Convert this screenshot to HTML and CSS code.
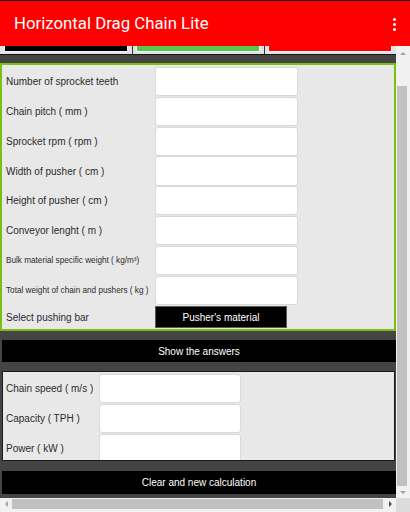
FILE: index.html
```html
<!DOCTYPE html>
<html>
<head>
<meta charset="utf-8">
<link rel="stylesheet" href="styles.css">
</head>
<body>
<div class="app">
  <header class="appbar">
    <span class="title">Horizontal Drag Chain Lite</span>
    <span class="menu"><i></i><i></i><i></i></span>
  </header>
  <div class="viewport">
    <div class="vrow">
      <main class="content">
        <div class="tabs">
          <div class="tab"><div class="tab-btn black"></div></div>
          <div class="tab sep"><div class="tab-btn green"></div></div>
          <div class="tab sep"><div class="tab-btn red"></div></div>
        </div>
        <section class="inputs">
          <div class="grid">
            <label class="lbl">Number of sprocket teeth</label><div class="field"></div>
            <label class="lbl">Chain pitch ( mm )</label><div class="field"></div>
            <label class="lbl">Sprocket rpm ( rpm )</label><div class="field"></div>
            <label class="lbl">Width of pusher ( cm )</label><div class="field"></div>
            <label class="lbl">Height of pusher ( cm )</label><div class="field"></div>
            <label class="lbl">Conveyor lenght ( m )</label><div class="field"></div>
            <label class="lbl small">Bulk material specific weight ( kg/m³)</label><div class="field"></div>
            <label class="lbl small">Total weight of chain and pushers ( kg )</label><div class="field"></div>
          </div>
          <div class="select-row">
            <label class="lbl">Select pushing bar</label>
            <div class="select-btn">Pusher's material</div>
          </div>
        </section>
        <div class="bar bar-show">Show the answers</div>
        <section class="results">
          <div class="grid res-grid">
            <label class="lbl">Chain speed ( m/s )</label><div class="field"></div>
            <label class="lbl">Capacity ( TPH )</label><div class="field"></div>
            <label class="lbl">Power ( kW )</label><div class="field"></div>
          </div>
        </section>
        <div class="bar bar-clear">Clear and new calculation</div>
      </main>
      <div class="vscroll">
        <div class="sb-btn up"><span class="tri-up"></span></div>
        <div class="v-space"></div>
        <div class="v-thumb"></div>
        <div class="sb-btn down"><span class="tri-down"></span></div>
      </div>
    </div>
    <div class="hrow">
      <div class="hscroll">
        <div class="hb-btn"><span class="tri-left"></span></div>
        <div class="h-thumb"></div>
        <div class="hb-btn right"><span class="tri-right"></span></div>
      </div>
      <div class="corner"></div>
    </div>
  </div>
</div>
</body>
</html>
```

FILE: styles.css
```css
* { box-sizing: border-box; }
html, body { margin: 0; padding: 0; }
body {
  width: 410px;
  height: 512px;
  overflow: hidden;
  font-family: "Liberation Sans", Arial, sans-serif;
  background: #444;
}
.app { width: 410px; height: 512px; display: flex; flex-direction: column; }

.appbar {
  height: 46px;
  flex: none;
  background: #ff0000;
  border-top: 1px solid #1c1c1c;
  display: flex;
  align-items: center;
  justify-content: space-between;
  padding: 0 14px 0 14px;
}
.title {
  color: #fff;
  font-family: Roboto, "Liberation Sans", sans-serif;
  font-size: 16.8px;
  line-height: 1;
  margin-top: -1px;
}
.menu { display: flex; flex-direction: column; gap: 2px; margin-top: 1px; }
.menu i { display: block; width: 3px; height: 3px; border-radius: 50%; background: #fff; }

.viewport { flex: 1; display: flex; flex-direction: column; }
.vrow { display: flex; height: 452px; }
.content {
  width: 396px;
  height: 452px;
  overflow: hidden;
  background: #444;
  display: flex;
  flex-direction: column;
}

.tabs { display: flex; height: 9px; flex: none; border-bottom: 1px solid #151515; }
.tab { flex: 1; background: #e2e2e2; padding: 0 4px 2px; }
.tab.sep { border-left: 1px solid #333; padding-left: 3px; }
.tab-btn { height: 100%; border: 1px solid #f6f6f6; border-top: none; }
.tab-btn.black { background: #000; }
.tab-btn.green { background: #55c84a; }
.tab-btn.red { background: #ff0000; }

.inputs {
  margin-top: 8px;
  height: 268px;
  flex: none;
  border: 2px solid #7cbf12;
  background: #e8e8e8;
  padding: 2px 0 0 4px;
}
.grid {
  display: grid;
  grid-template-columns: 149px 143px;
  grid-auto-rows: 29.8px;
}
.lbl {
  font-size: 10px;
  color: #2b2b2b;
  display: flex;
  align-items: center;
  white-space: nowrap;
  height: 29.3px;
}
.lbl.small { font-size: 8.2px; }
.field {
  height: 29.3px;
  background: #fff;
  border: 1px solid #d9d9d9;
  border-radius: 3px;
}
.select-row {
  display: grid;
  grid-template-columns: 149px 132px;
  height: 22px;
  margin-top: 1px;
}
.select-row .lbl { height: 22px; }
.select-btn {
  background: #000;
  border: 1px solid #5a5a5a;
  color: #fff;
  font-size: 10px;
  display: flex;
  align-items: center;
  justify-content: center;
}

.bar {
  flex: none;
  margin-left: 2px;
  background: #000;
  color: #fff;
  font-size: 10px;
  display: flex;
  align-items: center;
  justify-content: center;
}
.bar-show { margin-top: 9px; height: 22px; }
.bar-clear { margin-top: 10px; height: 23px; }

.results {
  margin: 9px 1px 0 2px;
  height: 90px;
  flex: none;
  overflow: hidden;
  border: 1px solid #1a1a1a;
  background: #e8e8e8;
  padding: 2px 0 0 3px;
}
.res-grid { grid-template-columns: 93px 142px; grid-auto-rows: 30px; }
.res-grid .lbl, .res-grid .field { height: 29.3px; }

.vscroll {
  width: 14px;
  height: 452px;
  background: #f1f1f1;
  display: flex;
  flex-direction: column;
}
.sb-btn { display: flex; align-items: center; justify-content: center; flex: none; }
.sb-btn.up { height: 14px; }
.sb-btn.down { height: 12px; }
.v-space { height: 26px; flex: none; }
.v-thumb { height: 400px; flex: none; width: 10px; margin-left: 1px; background: #c1c1c1; }
.tri-up { width: 0; height: 0; border-left: 3px solid transparent; border-right: 3px solid transparent; border-bottom: 3px solid #a3a3a3; }
.tri-down { width: 0; height: 0; border-left: 3px solid transparent; border-right: 3px solid transparent; border-top: 3px solid #a3a3a3; }

.hrow { display: flex; height: 14px; }
.hscroll {
  width: 396px;
  background: #f1f1f1;
  display: flex;
  align-items: flex-start;
}
.hb-btn { width: 12px; height: 12px; display: flex; align-items: center; justify-content: center; flex: none; }
.hb-btn.right { margin-left: 1px; }
.h-thumb { width: 371px; height: 10px; margin-top: 1px; background: #c1c1c1; flex: none; }
.tri-left { width: 0; height: 0; border-top: 3px solid transparent; border-bottom: 3px solid transparent; border-right: 3px solid #a3a3a3; }
.tri-right { width: 0; height: 0; border-top: 3px solid transparent; border-bottom: 3px solid transparent; border-left: 3px solid #505050; }
.corner { width: 14px; background: #dcdcdc; }
```
